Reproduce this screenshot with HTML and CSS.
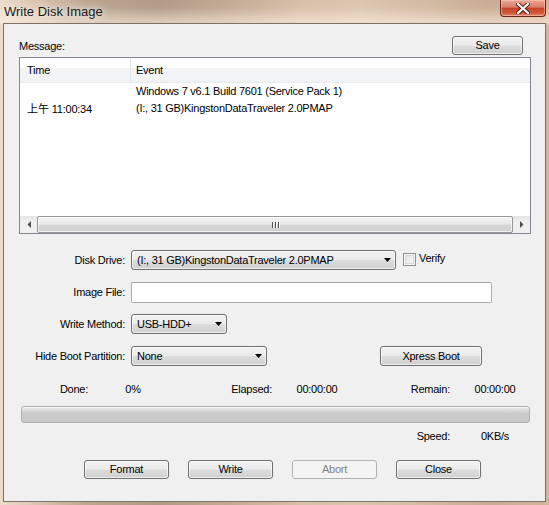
FILE: index.html
```html
<!DOCTYPE html>
<html>
<head>
<meta charset="utf-8">
<link rel="stylesheet" href="styles.css">
</head>
<body>
<div class="window">
  <div class="titlebar">
    <span class="title">Write Disk Image</span>
    <div class="close">
      <svg width="14" height="11" viewBox="0 0 14 11"><path d="M2 1 L12 10 M12 1 L2 10" stroke="#4a1a12" stroke-width="4" stroke-linecap="square"/><path d="M2 1 L12 10 M12 1 L2 10" stroke="#ffffff" stroke-width="2.2" stroke-linecap="square"/></svg>
    </div>
  </div>
  <div class="client">
    <div class="msg-row">
      <span class="msg-label">Message:</span>
      <button class="btn save">Save</button>
    </div>
    <div class="listview">
      <div class="lv-header">
        <div class="col-time">Time</div>
        <div class="col-event">Event</div>
      </div>
      <div class="lv-body">
        <div class="lv-row"><div class="col-time"></div><div class="col-event">Windows 7 v6.1 Build 7601 (Service Pack 1)</div></div>
        <div class="lv-row"><div class="col-time"><span class="cjk">上午</span> 11:00:34</div><div class="col-event">(I:, 31 GB)KingstonDataTraveler 2.0PMAP</div></div>
      </div>
      <div class="hscroll">
        <div class="sb-arrow"><svg width="4" height="7" viewBox="0 0 4 7"><polygon points="4,0 4,7 0.5,3.5" fill="#4d4d4d"/></svg></div>
        <div class="sb-thumb"><span class="grip"></span><span class="grip"></span><span class="grip"></span></div>
        <div class="sb-arrow"><svg width="4" height="7" viewBox="0 0 4 7"><polygon points="0,0 0,7 3.5,3.5" fill="#4d4d4d"/></svg></div>
      </div>
    </div>
    <div class="form">
      <label class="f-label">Disk Drive:</label>
      <div class="f-ctrl">
        <div class="combo w-disk"><span>(I:, 31 GB)KingstonDataTraveler 2.0PMAP</span><svg class="dd" width="7" height="4" viewBox="0 0 7 4"><polygon points="0,0 7,0 3.5,4" fill="#000"/></svg></div>
        <span class="checkbox"></span><span class="chk-label">Verify</span>
      </div>
      <label class="f-label">Image File:</label>
      <div class="f-ctrl"><div class="textbox"></div></div>
      <label class="f-label">Write Method:</label>
      <div class="f-ctrl">
        <div class="combo w-method"><span>USB-HDD+</span><svg class="dd" width="7" height="4" viewBox="0 0 7 4"><polygon points="0,0 7,0 3.5,4" fill="#000"/></svg></div>
      </div>
      <label class="f-label">Hide Boot Partition:</label>
      <div class="f-ctrl">
        <div class="combo w-hide"><span>None</span><svg class="dd" width="7" height="4" viewBox="0 0 7 4"><polygon points="0,0 7,0 3.5,4" fill="#000"/></svg></div>
        <button class="btn xpress">Xpress Boot</button>
      </div>
    </div>
    <div class="status">
      <span class="s-label">Done:</span><span class="s-val">0%</span>
      <span class="s-label">Elapsed:</span><span class="s-val">00:00:00</span>
      <span class="s-label">Remain:</span><span class="s-val">00:00:00</span>
    </div>
    <div class="progress"></div>
    <div class="status speed">
      <span></span><span></span><span></span><span></span>
      <span class="s-label">Speed:</span><span class="s-val">0KB/s</span>
    </div>
    <div class="buttons">
      <button class="btn act">Format</button>
      <button class="btn act">Write</button>
      <button class="btn act disabled">Abort</button>
      <button class="btn act">Close</button>
    </div>
  </div>
</div>
</body>
</html>
```

FILE: styles.css
```css
* { box-sizing: border-box; }
html, body { margin: 0; padding: 0; }
body {
  width: 549px;
  height: 505px;
  overflow: hidden;
  font-family: "Liberation Sans", Arial, sans-serif;
  font-size: 11px;
  letter-spacing: -0.25px;
  color: #000;
}
.window {
  width: 549px;
  height: 505px;
  display: flex;
  flex-direction: column;
  padding: 0 3px 3px 3px;
  background:
    linear-gradient(180deg, rgba(255,245,235,0) 0px, rgba(255,245,235,0.05) 8px, rgba(255,244,232,0.55) 22px, rgba(255,244,232,0) 26px),
    linear-gradient(90deg, #ecdccb 0px, #d9c2ae 40px, #bba58f 90px, #b09a86 160px, #c3aa94 230px, #d7bfa8 300px, #dcc6b0 360px, #d2b9a2 430px, #c9ab92 490px, #d3b59a 549px);
}
.titlebar {
  height: 23px;
  display: flex;
  align-items: flex-start;
}
.title {
  font-size: 13px;
  letter-spacing: 0;
  line-height: 15px;
  margin-top: 4px;
  margin-left: 1px;
  color: #1a1a1a;
  text-shadow: 0 0 6px rgba(255,255,255,0.9), 0 0 10px rgba(255,255,255,0.7);
}
.close {
  margin-left: auto;
  width: 46px;
  height: 17px;
  border: 1px solid #6a2418;
  border-top: none;
  border-radius: 0 0 4px 4px;
  background: linear-gradient(180deg, #e9a797 0%, #dc7d68 45%, #c5432b 50%, #d1563a 80%, #e0866c 100%);
  display: flex;
  align-items: center;
  justify-content: center;
  box-shadow: inset 0 0 0 1px rgba(255,210,200,0.5);
}
.client {
  flex: 1;
  border: 1px solid #7d7168;
  background: #f0f0f0;
  padding: 0 14px 0 15px;
  display: flex;
  flex-direction: column;
}
.msg-row {
  margin-top: 12px;
  height: 21px;
  display: flex;
  justify-content: space-between;
  align-items: flex-start;
}
.msg-label { margin-top: 4px; line-height: 13px; }
.btn {
  font: inherit;
  letter-spacing: inherit;
  color: #000;
  height: 19px;
  padding: 0;
  border: 1px solid #707070;
  border-radius: 3px;
  background: linear-gradient(180deg, #f2f2f2 0%, #ebebeb 48%, #dddddd 52%, #cfcfcf 100%);
  box-shadow: inset 0 0 0 1px rgba(255,255,255,0.65);
  line-height: 15px;
}
.save { width: 71px; margin-right: 8px; }
.listview {
  height: 177px;
  border: 1px solid #828790;
  background: #fff;
  display: flex;
  flex-direction: column;
}
.lv-header {
  height: 25px;
  display: flex;
  align-items: stretch;
  background: linear-gradient(180deg, #ffffff 0%, #ffffff 40%, #f3f4f6 42%, #f1f2f4 100%);
  border-bottom: 1px solid #e8e9eb;
}
.lv-header > div { display: flex; align-items: center; }
.col-time { width: 111px; padding-left: 7px; border-right: 1px solid #e3e5e8; flex: none; }
.lv-row .col-time { border-right: none; }
.col-event { padding-left: 5px; white-space: nowrap; }
.lv-body { flex: 1; }
.lv-row { height: 17px; display: flex; align-items: center; line-height: 17px; }
.cjk { font-family: "Noto Sans CJK SC", sans-serif; font-size: 11px; letter-spacing: 0; }
.hscroll {
  height: 17px;
  display: flex;
  align-items: stretch;
  background: linear-gradient(180deg, #e4e4e4 0%, #efefef 30%, #f0f0f0 100%);
}
.sb-arrow { width: 17px; display: flex; align-items: center; justify-content: center; }
.sb-thumb {
  flex: 1;
  border: 1px solid #979797;
  border-radius: 2px;
  background: linear-gradient(180deg, #f4f4f4 0%, #e9e9e9 45%, #d6d6d6 55%, #cfcfcf 100%);
  box-shadow: inset 0 0 0 1px rgba(255,255,255,0.7);
  display: flex;
  align-items: center;
  justify-content: center;
  gap: 2px;
}
.grip { width: 1px; height: 6px; background: #4f4f4f; box-shadow: 1px 0 0 #fff; }
.form {
  margin-top: 16px;
  display: grid;
  grid-template-columns: 106px 1fr;
  column-gap: 6px;
  row-gap: 12px;
  grid-auto-rows: 20px;
}
.f-label { text-align: right; align-self: center; line-height: 13px; }
.f-ctrl { display: flex; align-items: flex-start; }
.combo {
  height: 20px;
  border: 1px solid #707070;
  border-radius: 3px;
  background: linear-gradient(180deg, #f2f2f2 0%, #ebebeb 48%, #dddddd 52%, #cfcfcf 100%);
  box-shadow: inset 0 0 0 1px rgba(255,255,255,0.65);
  display: flex;
  align-items: center;
  padding-left: 5px;
  white-space: nowrap;
}
.combo .dd { margin-left: auto; margin-right: 4px; flex: none; }
.w-disk { width: 265px; }
.w-method { width: 96px; }
.w-hide { width: 136px; }
.checkbox {
  width: 13px;
  height: 13px;
  margin-left: 7px;
  margin-top: 3px;
  border: 1px solid #8e8f8f;
  background: linear-gradient(135deg, #dcdcdc 0%, #f4f4f4 70%, #fbfbfb 100%);
  box-shadow: inset 0 0 0 1px #f6f6f6, inset 0 0 0 2px #d8d8d8;
  flex: none;
}
.chk-label { margin-left: 3px; line-height: 13px; margin-top: 2px; }
.textbox {
  width: 361px;
  height: 21px;
  border: 1px solid #abadb3;
  border-top-color: #a0a2a8;
  border-radius: 2px;
  background: #fff;
}
.xpress { width: 102px; height: 20px; margin-left: 113px; }
.status {
  margin-top: 17px;
  display: grid;
  grid-template-columns: 69px 90px 94px 90px 88px 90px;
  line-height: 13px;
  height: 13px;
}
.s-label { text-align: right; }
.s-val { text-align: center; }
.progress {
  margin: 10px 1px 0 2px;
  height: 17px;
  border: 1px solid #b0b0b0;
  border-radius: 3px;
  background: linear-gradient(180deg, #ececec 0%, #d8d8d8 25%, #cbcbcb 45%, #c8c8c8 100%);
  box-shadow: inset 0 1px 0 #f6f6f6;
}
.speed { margin-top: 7px; }
.buttons {
  margin-top: 17px;
  display: flex;
  gap: 19px;
  padding-left: 65px;
}
.act { width: 85px; }
.disabled {
  color: #838383;
  border-color: #adb2b5;
  background: #f4f4f4;
  box-shadow: none;
}
```
